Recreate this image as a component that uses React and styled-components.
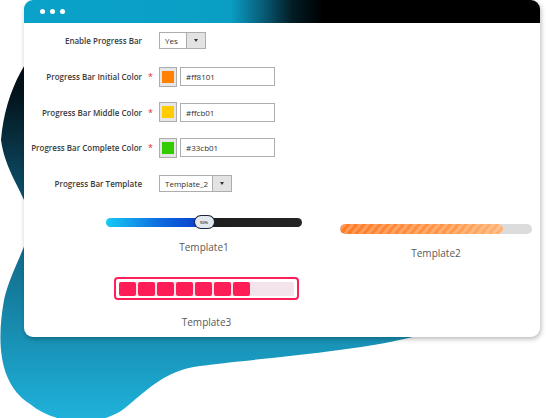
import React from 'react';
import styled, { createGlobalStyle } from 'styled-components';

const GlobalStyle = createGlobalStyle`
  html, body {
    margin: 0;
    padding: 0;
    background: #fff;
  }
  body {
    font-family: "Open Sans", "Liberation Sans", sans-serif;
  }
  * {
    box-sizing: border-box;
  }
`;

const Stage = styled.div`
  position: relative;
  width: 546px;
  height: 418px;
  overflow: hidden;
  background: #fff;
`;

const Blob = styled.svg`
  position: absolute;
  left: 0;
  top: 0;
  z-index: 0;
`;

const Card = styled.div`
  position: relative;
  z-index: 1;
  margin-left: 24px;
  width: 516px;
  height: 337px;
  background: #fff;
  border-radius: 9px;
  box-shadow: 1px 2px 5px rgba(0, 0, 0, 0.28);
  display: flex;
  flex-direction: column;
  overflow: hidden;
`;

const TitleBar = styled.div`
  flex: none;
  height: 23px;
  display: flex;
  align-items: center;
  gap: 5px;
  padding-left: 16px;
  background: linear-gradient(90deg, #0aa2ca 0%, #0a9ec4 40%, #08607b 46%, #021c25 52%, #000 58%, #000 100%);
`;

const Dot = styled.span`
  width: 5px;
  height: 5px;
  border-radius: 50%;
  background: #fff;
`;

const Form = styled.div`
  display: grid;
  grid-template-columns: 118px 17px auto;
  grid-auto-rows: 35.7px;
  align-items: center;
`;

const Label = styled.div`
  grid-column: 1;
  text-align: right;
  font-size: 8px;
  font-weight: 600;
  color: #3b3b3b;
  white-space: nowrap;
`;

const Required = styled.span`
  grid-column: 2;
  text-align: center;
  color: #e02b27;
  font-size: 9px;
  line-height: 9px;
`;

const Control = styled.div`
  grid-column: 3;
  display: flex;
  align-items: center;
  gap: 3px;
`;

const Select = styled.div`
  display: flex;
  width: ${({ $width }) => $width}px;
  height: 17px;
  border: 1px solid #adadad;
  background: #fff;
`;

const SelectValue = styled.span`
  flex: 1;
  padding-left: 5px;
  font-size: 8px;
  line-height: 15px;
  color: #303030;
`;

const SelectArrow = styled.span`
  width: 19px;
  border-left: 1px solid #adadad;
  background: #e3e3e3;
  display: flex;
  align-items: center;
  justify-content: center;
  &::after {
    content: '';
    border-left: 2.5px solid transparent;
    border-right: 2.5px solid transparent;
    border-top: 3px solid #333;
  }
`;

const Swatch = styled.span`
  display: flex;
  width: 18px;
  height: 20px;
  padding: 3px 2px;
  border: 1px solid #adadad;
  background: #e6e6e6;
  &::after {
    content: '';
    flex: 1;
    background: ${({ $color }) => $color};
  }
`;

const TextInput = styled.div`
  width: 95px;
  height: 19px;
  padding-left: 5px;
  border: 1px solid #adadad;
  font-size: 8px;
  line-height: 17px;
  color: #303030;
`;

const Templates = styled.div`
  display: grid;
  grid-template-columns: 196px 192px;
  column-gap: 38px;
  row-gap: 17px;
  padding: 15px 0 0 82px;
`;

const Sample = styled.div`
  display: flex;
  flex-direction: column;
  align-items: center;
  gap: ${({ $gap }) => $gap}px;
  margin-top: ${({ $offset }) => $offset || 0}px;
  margin-left: ${({ $shift }) => $shift || 0}px;
`;

const Caption = styled.div`
  font-size: 10px;
  line-height: 14px;
  color: #595959;
`;

const Slider = styled.div`
  position: relative;
  width: 100%;
  height: 12px;
  display: flex;
  align-items: center;
`;

const SliderTrack = styled.div`
  width: 100%;
  height: 9px;
  border-radius: 5px;
  background: linear-gradient(90deg, #18c9f6 0%, #0d6ade 28%, #0a3acb 50%, #1f1f1f 50%, #232323 100%);
`;

const Knob = styled.span`
  position: absolute;
  top: 0;
  left: calc(50% - 9.5px);
  width: 19px;
  height: 12px;
  border-radius: 6px;
  background: #e3e8ef;
  box-shadow: 0 0 0 1px #1b2740;
  display: flex;
  align-items: center;
  justify-content: center;
  font-size: 4px;
  font-weight: 600;
  color: #333;
`;

const StripeBar = styled.div`
  width: 100%;
  height: 10px;
  border-radius: 5px;
  background: #dcdcdc;
  overflow: hidden;
`;

const StripeFill = styled.div`
  height: 100%;
  border-radius: 5px;
  background:
    repeating-linear-gradient(-50deg, rgba(255, 255, 255, 0.22) 0 3px, transparent 3px 6px),
    linear-gradient(90deg, #ff7a26, #ff9a4c 70%, #ffb374);
`;

const BlockBox = styled.div`
  width: 185px;
  padding: 2.5px 3px;
  border: 2px solid #ff2059;
  border-radius: 4px;
  background: #fff;
`;

const BlockTrack = styled.div`
  display: flex;
  gap: 2px;
  height: 14px;
  border-radius: 2px;
  background: #f2e4ea;
`;

const Block = styled.span`
  width: 17px;
  border-radius: 2px;
  background: #ff1d58;
`;

const fields = [
  { label: 'Progress Bar Initial Color', color: '#ff8101' },
  { label: 'Progress Bar Middle Color', color: '#ffcb01' },
  { label: 'Progress Bar Complete Color', color: '#33cb01' },
];

export default function App() {
  return (
    <Stage>
      <GlobalStyle />
      <Blob width="546" height="418" viewBox="0 0 546 418">
        <defs>
          <linearGradient id="blobFill" x1="0" y1="0" x2="0" y2="1">
            <stop offset="0" stopColor="#01070a" />
            <stop offset="0.18" stopColor="#03131b" />
            <stop offset="0.5" stopColor="#0f5f7c" />
            <stop offset="1" stopColor="#1fb3dc" />
          </linearGradient>
        </defs>
        <path
          fill="url(#blobFill)"
          d="M60 30 C30 45 5 90 1 140 C5 170 22 190 30 215 C35 235 12 265 4 300
             C-4 345 0 385 30 404 C55 425 100 428 125 408 C145 392 165 370 200 366
             C240 360 360 352 420 335 L520 250 L500 20 Z"
        />
      </Blob>
      <Card>
        <TitleBar>
          <Dot />
          <Dot />
          <Dot />
        </TitleBar>
        <Form>
          <Label>Enable Progress Bar</Label>
          <Control>
            <Select $width={47}>
              <SelectValue>Yes</SelectValue>
              <SelectArrow />
            </Select>
          </Control>
          {fields.map((f) => (
            <React.Fragment key={f.label}>
              <Label>{f.label}</Label>
              <Required>*</Required>
              <Control>
                <Swatch $color={f.color} />
                <TextInput>{f.color}</TextInput>
              </Control>
            </React.Fragment>
          ))}
          <Label>Progress Bar Template</Label>
          <Control>
            <Select $width={73}>
              <SelectValue>Template_2</SelectValue>
              <SelectArrow />
            </Select>
          </Control>
        </Form>
        <Templates>
          <Sample $gap={11.3}>
            <Slider>
              <SliderTrack />
              <Knob>50%</Knob>
            </Slider>
            <Caption>Template1</Caption>
          </Sample>
          <Sample $gap={12} $offset={7.6}>
            <StripeBar>
              <StripeFill style={{ width: '85%' }} />
            </StripeBar>
            <Caption>Template2</Caption>
          </Sample>
          <Sample $gap={14.6} $shift={5}>
            <BlockBox>
              <BlockTrack>
                {Array.from({ length: 7 }).map((_, i) => (
                  <Block key={i} />
                ))}
              </BlockTrack>
            </BlockBox>
            <Caption>Template3</Caption>
          </Sample>
        </Templates>
      </Card>
    </Stage>
  );
}
